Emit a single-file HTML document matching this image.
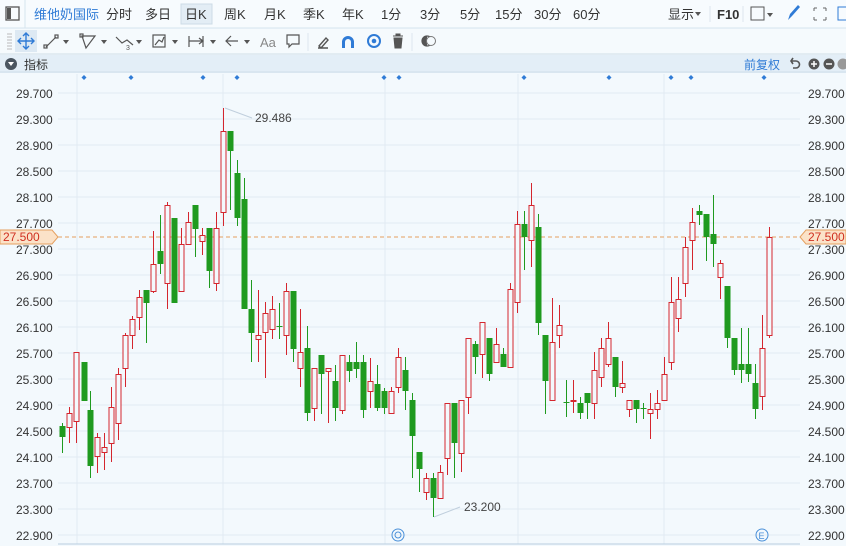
<!DOCTYPE html>
<html><head><meta charset="utf-8"><style>
html,body{margin:0;padding:0;width:846px;height:546px;overflow:hidden;background:#f3f9fd;font-family:"Liberation Sans","Noto Sans CJK SC",sans-serif}
svg text{font-family:"Liberation Sans","Noto Sans CJK SC",sans-serif}
</style></head><body>
<svg id="s" width="846" height="546" xmlns="http://www.w3.org/2000/svg">
<rect x="0" y="0" width="846" height="546" fill="#f3f9fd"/>
<!-- row1 -->
<rect x="0" y="0" width="846" height="28" fill="#f7fbfe"/>
<line x1="0" y1="28" x2="846" y2="28" stroke="#d6e4ee"/>
<line x1="25" y1="0" x2="25" y2="28" stroke="#d6e4ee"/>
<rect x="6" y="7" width="13" height="13" fill="none" stroke="#555" stroke-width="1.3"/>
<rect x="7" y="8" width="4" height="11" fill="#555"/>
<rect x="181" y="4" width="31" height="20" fill="#e3edf5" stroke="#cddbe6"/>
<g font-size="13" fill="#333">
<text x="34" y="19" fill="#2f7bd6">维他奶国际</text>
<text x="106" y="19">分时</text>
<text x="145" y="19">多日</text>
<text x="185" y="19">日K</text>
<text x="224" y="19">周K</text>
<text x="264" y="19">月K</text>
<text x="303" y="19">季K</text>
<text x="342" y="19">年K</text>
<text x="381" y="19">1分</text>
<text x="420" y="19">3分</text>
<text x="460" y="19">5分</text>
<text x="495" y="19">15分</text>
<text x="534" y="19">30分</text>
<text x="573" y="19">60分</text>
<text x="668" y="19">显示</text>
<text x="717" y="19" font-weight="bold">F10</text>
</g>
<path d="M695 12l6 0-3 4z" fill="#555"/>
<line x1="710" y1="6" x2="710" y2="22" stroke="#dde6ee"/>
<line x1="743" y1="6" x2="743" y2="22" stroke="#dde6ee"/>
<rect x="751" y="7" width="13" height="13" fill="none" stroke="#555"/>
<path d="M767 13l6 0-3 4z" fill="#555"/>
<path d="M788 20l2-6 8-9 2 2-8 9z" fill="#2f7bd6"/>
<g stroke="#666" fill="none"><path d="M814 8h3M814 8v3M826 8h-3M826 8v3M814 20h3M814 20v-3M826 20h-3M826 20v-3"/></g>
<rect x="838" y="7" width="10" height="13" fill="none" stroke="#2f7bd6"/>
<!-- row2 -->
<rect x="0" y="29" width="846" height="25" fill="#f5fafd"/>
<line x1="0" y1="54" x2="846" y2="54" stroke="#cfdde8"/>
<g stroke="#bbb"><line x1="7" y1="34" x2="12" y2="34"/><line x1="7" y1="37" x2="12" y2="37"/><line x1="7" y1="40" x2="12" y2="40"/><line x1="7" y1="43" x2="12" y2="43"/><line x1="7" y1="46" x2="12" y2="46"/><line x1="7" y1="49" x2="12" y2="49"/></g>
<rect x="15" y="30" width="22" height="22" fill="#dde9f3"/>
<g stroke="#2f7bd6" stroke-width="1.4" fill="none"><path d="M26 33v16M18 41h16M23 36l3-3 3 3M23 46l3 3 3-3M21 38l-3 3 3 3M31 38l3 3-3 3"/></g>
<g stroke="#555" stroke-width="1.2" fill="none">
<path d="M46 47l10-10"/><rect x="44" y="45" width="3" height="3"/><rect x="55" y="35" width="3" height="3"/>
<path d="M82 36h13l-9 12z"/><rect x="80" y="34" width="3" height="3"/>
<path d="M116 37l6 6 5-3 6 5"/>
<rect x="153" y="35" width="12" height="12"/><path d="M155 45l4-5 3 2 2-5"/>
<path d="M189 36v11M203 36v11M189 41h14M199 38l4 3-4 3"/>
<path d="M226 41h12M231 36l-5 5 5 5"/>
<path d="M287 35h12v9h-7l-3 3v-3h-2z"/>
</g>
<g fill="#555"><path d="M63 40h6l-3 4z"/><path d="M101 40h6l-3 4z"/><path d="M136 40h6l-3 4z"/><path d="M172 40h6l-3 4z"/><path d="M210 40h6l-3 4z"/><path d="M244 40h6l-3 4z"/></g>
<text x="126" y="50" font-size="7" fill="#555">3</text>
<text x="260" y="47" font-size="13" fill="#888">Aa</text>
<line x1="308" y1="33" x2="308" y2="51" stroke="#dde6ee"/>
<path d="M319 46l7-8 2 2-7 8zM318 48h10" stroke="#555" fill="none" stroke-width="1.4"/>
<path d="M342 48v-6a6 6 0 0 1 12 0v6h-3v-6a3 3 0 0 0-6 0v6z" fill="#2f7bd6"/>
<circle cx="374" cy="41" r="6" fill="none" stroke="#2f7bd6" stroke-width="2"/><circle cx="374" cy="41" r="2.3" fill="#2f7bd6"/>
<path d="M393 36h10M396 36v-2h4v2M394 38h8l-1 10h-6z" fill="#555" stroke="#555"/>
<line x1="412" y1="33" x2="412" y2="51" stroke="#dde6ee"/>
<circle cx="427" cy="41" r="5" fill="none" stroke="#555" stroke-width="1.2"/><path d="M422 41a5 5 0 0 0 5 5v-10a5 5 0 0 0-5 5z" fill="#555"/><circle cx="431" cy="41" r="4.5" fill="#f5fafd" stroke="#777"/>
<!-- row3 -->
<rect x="0" y="55" width="846" height="18" fill="#e3eef7"/>
<line x1="0" y1="72" x2="846" y2="72" stroke="#cfdde8"/>
<circle cx="11" cy="64" r="6" fill="#4a5560"/><path d="M8 62h6l-3 4z" fill="#fff"/>
<text x="24" y="69" font-size="12" fill="#333">指标</text>
<text x="744" y="69" font-size="12" fill="#2f7bd6">前复权</text>
<path d="M792 61h4a3.5 3.5 0 0 1 0 7h-3M793 58l-2 3 2 3" stroke="#555" stroke-width="1.6" fill="none"/>
<circle cx="814" cy="64" r="5.5" fill="#555"/><path d="M811 64h6M814 61v6" stroke="#fff" stroke-width="1.5"/>
<circle cx="829" cy="64" r="5.5" fill="#555"/><path d="M826 64h6" stroke="#fff" stroke-width="1.5"/>
<circle cx="843" cy="64" r="5.5" fill="#999"/>
<g id="grid"></g>
<g id="c"></g>
</svg>
<script>
var s=document.getElementById('grid'),NS='http://www.w3.org/2000/svg',h='';
var labs=['29.700','29.300','28.900','28.500','28.100','27.700','27.300','26.900','26.500','26.100','25.700','25.300','24.900','24.500','24.100','23.700','23.300','22.900'];
for(var i=0;i<18;i++){var y=93+i*26;h+='<line x1="58" y1="'+y+'" x2="800" y2="'+y+'" stroke="#e2ebf2"/>';
h+='<text x="16" y="'+(y+5)+'" font-size="12" fill="#333">'+labs[i]+'</text><text x="808" y="'+(y+5)+'" font-size="12" fill="#333">'+labs[i]+'</text>';}
[77,223,385,518,664].forEach(function(x){h+='<line x1="'+x+'" y1="74" x2="'+x+'" y2="544" stroke="#e2ebf2"/>';});
h+='<line x1="58" y1="544" x2="800" y2="544" stroke="#b8cde0"/>';
[84,131,203,237,384,399,524,609,671,691,764].forEach(function(x){h+='<path d="M'+x+' 75l2.5 2.5-2.5 2.5-2.5-2.5z" fill="#2f7bd6"/>';});
h+='<line x1="58" y1="237" x2="800" y2="237" stroke="#e6a060" stroke-dasharray="4,3"/>';
h+='<path d="M0 230h52l6 7-6 7h-52z" fill="#fbe2c8" stroke="#e6a060"/><text x="3" y="241" font-size="12" fill="#d03020">27.500</text>';
h+='<path d="M846 230h-40l-6 7 6 7h40z" fill="#fbe2c8" stroke="#e6a060"/><text x="808" y="241" font-size="12" fill="#d03020">27.500</text>';
h+='<line x1="225" y1="108" x2="252" y2="118" stroke="#c0cfdd"/><text x="255" y="122" font-size="12" fill="#444">29.486</text>';
h+='<line x1="434" y1="517" x2="460" y2="507" stroke="#c0cfdd"/><text x="464" y="511" font-size="12" fill="#444">23.200</text>';
h+='<circle cx="398" cy="535" r="6" fill="none" stroke="#4a90d9"/><circle cx="398" cy="535" r="3" fill="none" stroke="#4a90d9"/>';
h+='<circle cx="762" cy="535" r="6" fill="none" stroke="#4a90d9"/><text x="758.5" y="539" font-size="9" fill="#4a90d9">E</text>';
s.innerHTML=h;
var d=[[62,426,437,423,453,'g'],[69,413,427,407,443,'r'],[76,352,421,352,443,'r'],[84,362,401,362,401,'g'],[90,410,466,391,478,'g'],[97,437,456,433,473,'r'],[104,447,452,433,470,'r'],[111,407,443,387,462,'r'],[118,374,423,368,440,'r'],[125,335,368,333,387,'r'],[132,319,335,316,349,'r'],[139,297,317,290,330,'r'],[146,290,303,290,343,'g'],[153,264,291,231,293,'r'],[160,251,264,215,274,'g'],[167,205,283,202,309,'r'],[174,218,303,218,303,'g'],[181,244,291,228,291,'r'],[188,222,244,212,244,'r'],[195,205,229,205,257,'g'],[202,235,241,228,255,'r'],[209,228,271,228,288,'g'],[216,228,283,212,291,'r'],[223,131,212,108,226,'r'],[230,131,151,131,210,'g'],[237,173,218,160,226,'g'],[244,199,309,178,309,'g'],[251,309,333,280,362,'g'],[258,335,339,290,362,'r'],[265,313,332,302,378,'r'],[272,309,329,296,339,'r'],[279,326,327,303,339,'g'],[286,291,335,283,355,'r'],[293,291,349,291,362,'g'],[300,352,368,309,387,'r'],
[307,348,413,326,421,'g'],[314,368,408,368,421,'r'],[321,355,374,355,414,'g'],[328,368,371,368,423,'r'],[335,381,408,365,421,'g'],[342,355,410,355,414,'r'],[349,362,371,355,382,'g'],[356,362,369,342,378,'g'],[363,362,410,355,418,'g'],[370,381,391,358,408,'r'],[377,384,408,365,411,'g'],[384,391,408,388,414,'g'],[391,391,413,387,413,'r'],[398,357,387,348,393,'r'],[405,370,391,357,410,'g'],[412,400,436,393,478,'g'],[419,452,469,452,492,'g'],[426,478,492,473,500,'r'],[433,478,498,473,517,'g'],[440,472,498,465,498,'r'],[447,403,458,403,475,'r'],[454,403,443,403,478,'g'],[461,400,453,400,472,'r'],[468,338,397,338,414,'r'],[475,344,357,341,374,'g'],[482,322,354,322,378,'r'],[489,338,374,338,381,'g'],[496,344,362,328,362,'r'],[503,354,367,348,367,'g'],[510,289,367,283,367,'r'],[517,224,302,211,313,'r'],[524,224,237,211,270,'g'],[531,205,240,183,267,'r'],[538,227,323,214,335,'g'],[545,335,381,335,414,'g'],
[552,342,400,298,400,'r'],[559,325,335,305,348,'r'],[566,402,403,380,417,'g'],[573,400,401,380,413,'r'],[580,403,413,397,419,'g'],[587,393,403,393,419,'g'],[594,370,403,352,419,'r'],[601,348,377,338,387,'r'],[608,338,364,322,367,'r'],[615,357,387,357,397,'g'],[622,383,387,361,393,'r'],[629,400,409,400,417,'r'],[636,400,409,400,423,'g'],[643,408,409,403,419,'g'],[650,409,413,393,439,'r'],[657,403,409,390,419,'r'],[664,374,400,357,400,'r'],[671,302,362,277,370,'r'],[678,299,318,277,332,'r'],[685,247,283,237,297,'r'],[692,222,240,208,270,'r'],[699,211,215,205,225,'g'],[706,214,237,214,261,'g'],[713,234,244,195,267,'g'],[720,263,277,260,299,'r'],[727,286,338,286,348,'g'],[734,338,370,338,375,'g'],[741,364,370,328,383,'g'],[748,364,374,328,382,'g'],[755,383,409,364,419,'g'],[762,348,396,315,410,'r'],[769,237,335,227,338,'r']];
var c='';
d.forEach(function(k){var x=k[0]+0.5,col=k[5]=='r'?'#d4262e':'#1f9a1f';
if(k[5]=='r'){c+='<line x1="'+x+'" y1="'+k[3]+'" x2="'+x+'" y2="'+k[1]+'" stroke="'+col+'"/><line x1="'+x+'" y1="'+k[2]+'" x2="'+x+'" y2="'+k[4]+'" stroke="'+col+'"/>';
c+='<rect x="'+(k[0]-2)+'" y="'+(k[1]+0.5)+'" width="5" height="'+Math.max(1,k[2]-k[1])+'" fill="#f3f9fd" stroke="'+col+'"/>';}
else{c+='<line x1="'+x+'" y1="'+k[3]+'" x2="'+x+'" y2="'+k[4]+'" stroke="'+col+'"/>';
c+='<rect x="'+(k[0]-2.5)+'" y="'+k[1]+'" width="6" height="'+Math.max(1,k[2]-k[1])+'" fill="'+col+'"/>';}});
document.getElementById('c').innerHTML=c;
</script>
</body></html>
